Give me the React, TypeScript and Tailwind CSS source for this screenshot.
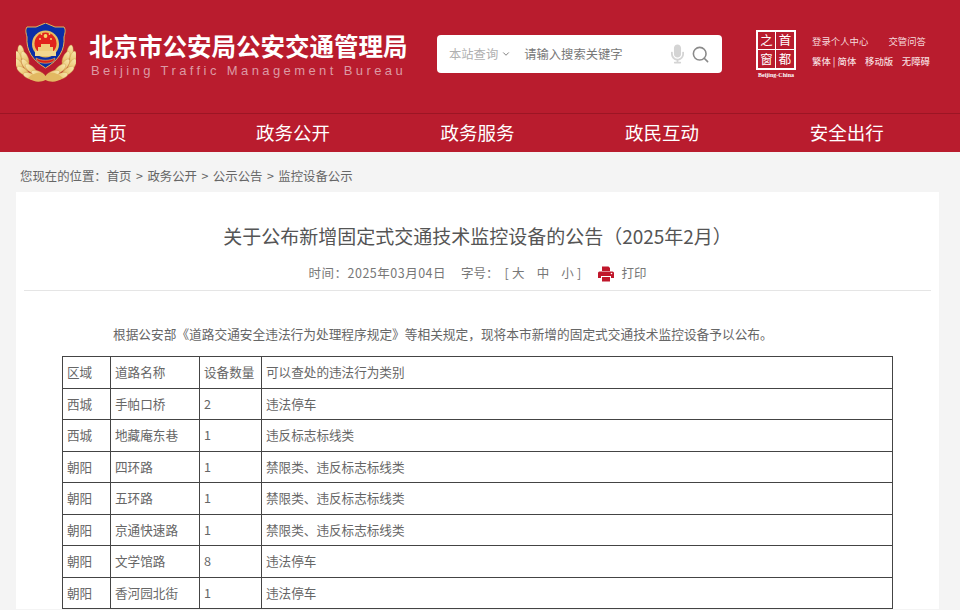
import { ChevronDown, Search } from 'lucide-react';
import { FaMicrophone } from 'react-icons/fa';

const navItems = ['首页', '政务公开', '政务服务', '政民互动', '安全出行'];

const rows = [
  ['区域', '道路名称', '设备数量', '可以查处的违法行为类别'],
  ['西城', '手帕口桥', '2', '违法停车'],
  ['西城', '地藏庵东巷', '1', '违反标志标线类'],
  ['朝阳', '四环路', '1', '禁限类、违反标志标线类'],
  ['朝阳', '五环路', '1', '禁限类、违反标志标线类'],
  ['朝阳', '京通快速路', '1', '禁限类、违反标志标线类'],
  ['朝阳', '文学馆路', '8', '违法停车'],
  ['朝阳', '香河园北街', '1', '违法停车'],
];

// wreath leaves for the left side, mirrored for the right
const leaves = [
  [11, 32, 10],
  [8, 38, 15],
  [15, 38, 25],
  [9, 45, 30],
  [16, 45, 35],
  [13, 51, 55],
  [21, 49, 50],
  [20, 56, 72],
  [28, 54, 70],
];

const Emblem = () => (
  <svg width="60" height="60" viewBox="6 3 60 60" className="shrink-0 mb-[7px]">
    <defs>
      <linearGradient id="gold" x1="0" y1="0" x2="0" y2="1">
        <stop offset="0" stopColor="#f8e7ae" />
        <stop offset="0.6" stopColor="#eccb7c" />
        <stop offset="1" stopColor="#d6a84c" />
      </linearGradient>
    </defs>
    {leaves.map(([x, y, r], i) => (
      <g key={i}>
        <ellipse cx={x} cy={y} rx="3" ry="7" transform={`rotate(${-r} ${x} ${y})`} fill="url(#gold)" stroke="#cfa24e" strokeWidth="0.4" />
        <ellipse cx={71 - x} cy={y} rx="3" ry="7" transform={`rotate(${r} ${71 - x} ${y})`} fill="url(#gold)" stroke="#cfa24e" strokeWidth="0.4" />
      </g>
    ))}
    <path d="M18 58 C26 51 32 52 35.5 56 C39 52 45 51 53 58 C46 63 40 62 35.5 60 C31 62 25 63 18 58Z" fill="#e2b962" />
    <path d="M35.5 3 L45 7 L54 7 C56 10 55 13 54 17 C55 30 49 40 35.5 48 C22 40 16 30 17 17 C16 13 15 10 17 7 L26 7Z" fill="#0b2ea6" stroke="#dfb65c" strokeWidth="1" />
    <circle cx="35.5" cy="24" r="13.5" fill="#e8bf62" />
    <circle cx="35.5" cy="23.5" r="11" fill="#e2231c" />
    <path d="M25 31 H46 V36 H25Z" fill="#f2d890" />
    <path d="M28 27 H43 V31 H28Z M31 24 H40 V27 H31Z" fill="#efcf7c" />
    <path d="M26 38 C31 41 40 41 45 38 L44 41 C39 44 32 44 27 41Z" fill="#d92018" stroke="#e8bf62" strokeWidth="0.6" />
    <circle cx="35.5" cy="16" r="1.9" fill="#f6d868" />
    <circle cx="30" cy="19" r="1" fill="#f6d868" />
    <circle cx="41" cy="19" r="1" fill="#f6d868" />
    <circle cx="31.5" cy="14" r="0.9" fill="#f6d868" />
    <circle cx="39.5" cy="14" r="0.9" fill="#f6d868" />
  </svg>
);

const PrintIcon = () => (
  <svg width="16" height="16" viewBox="0 0 16 16" className="shrink-0 mt-[3px] ml-[17px]">
    <path d="M4 0.5 H10.5 L12 2 V5 H4Z" fill="#c0172b" />
    <path d="M1.5 5.5 H14.5 Q16 5.5 16 7 V12 H13 V10 H3 V12 H0 V7 Q0 5.5 1.5 5.5Z" fill="#c0172b" />
    <path d="M4 11 H12 V15.5 H4Z" fill="#c0172b" />
    <circle cx="13.5" cy="7.5" r="0.8" fill="#ffffff" />
  </svg>
);

const CapitalLogo = () => (
  <div className="flex flex-col items-center w-[44px] shrink-0 ml-[32px] mb-[4px]">
    <div className="w-[40px] h-[40px] border-[2px] border-white grid grid-cols-2 grid-rows-2 text-white text-[12.4px] leading-none">
      <span className="flex items-center justify-center border-r border-b border-white">之</span>
      <span className="flex items-center justify-center border-b border-white">首</span>
      <span className="flex items-center justify-center border-r border-white">窗</span>
      <span className="flex items-center justify-center">都</span>
    </div>
    <span className="text-[6px] leading-[8px] mt-[1px] text-white font-bold whitespace-nowrap font-['Liberation_Serif',serif]">Beijing-China</span>
  </div>
);

const App = () => {
  return (
    <div className="h-[610px] overflow-hidden bg-[#f4f4f4] font-['Noto_Sans_CJK_SC','Noto_Sans',sans-serif]">
      <header className="bg-[#b91c2e] h-[152px] flex flex-col">
        <div className="h-[114px] flex items-center pl-[16px] border-b border-[#9c1524]">
          <Emblem />
          <div className="ml-[13px] w-[320px] shrink-0 pb-[4px]">
            <h1 className="text-[24.5px] leading-[32px] font-bold text-white whitespace-nowrap">北京市公安局公安交通管理局</h1>
            <p className="text-[13px] leading-[16px] mt-[1px] pl-[2px] tracking-[3.4px] text-[#dc9aa4] whitespace-nowrap font-['Liberation_Sans',sans-serif]">Beijing Traffic Management Bureau</p>
          </div>
          <div className="ml-[28px] w-[285px] h-[38px] shrink-0 mb-[5px] bg-white rounded-[4px] flex items-center pl-[12px] pr-[12px] text-[12.3px]">
            <span className="text-[#b0b0b0] whitespace-nowrap">本站查询</span>
            <ChevronDown className="w-[10px] h-[10px] text-[#666666] ml-[3px]" />
            <span className="ml-[13px] text-[#777777] whitespace-nowrap">请输入搜索关键字</span>
            <FaMicrophone className="ml-auto w-[13px] h-[20px] text-[#d4d4d4]" />
            <Search className="ml-[7px] w-[19px] h-[19px] text-[#8a8a8a]" />
          </div>
          <CapitalLogo />
          <div className="ml-[14px] w-[118px] shrink-0 mb-[11px] text-[9.4px] leading-[14px] text-[#f6dadd] whitespace-nowrap">
            <div className="flex justify-between pr-[4px]">
              <span>登录个人中心</span>
              <span>交管问答</span>
            </div>
            <div className="flex justify-between mt-[6px] font-medium">
              <span>繁体 | 简体</span>
              <span>移动版</span>
              <span>无障碍</span>
            </div>
          </div>
        </div>
        <nav className="flex-1 grid grid-cols-5 ml-[16px] mr-[21px] items-center text-white text-[18.5px] text-center">
          {navItems.map((item) => (
            <a key={item}>{item}</a>
          ))}
        </nav>
      </header>

      <div className="h-[40px] pl-[20px] pt-[8px] flex items-center text-[12.4px] text-[#666666]">
        <span>您现在的位置：</span>
        <span>首页</span>
        <span className="mx-[4.5px]">&gt;</span>
        <span>政务公开</span>
        <span className="mx-[4.5px]">&gt;</span>
        <span>公示公告</span>
        <span className="mx-[4.5px]">&gt;</span>
        <span>监控设备公示</span>
      </div>

      <main className="ml-[16px] w-[923px] bg-white px-[8px] pt-[30px]">
        <h2 className="text-[19px] leading-[28px] text-[#555555] text-center">关于公布新增固定式交通技术监控设备的公告（2025年2月）</h2>
        <div className="mt-[13px] h-[28px] border-b border-[#e5e5e5] flex justify-center items-start text-[12.5px] leading-[20px] text-[#777777]">
          <span className="tracking-[0.5px]">时间：2025年03月04日</span>
          <span className="ml-[15px]">字号：</span>
          <span className="ml-[6px] whitespace-pre tracking-[0.2px]">[ 大    中    小 ]</span>
          <PrintIcon />
          <span className="ml-[7px]">打印</span>
        </div>
        <p className="mt-[33px] ml-[89px] text-[12.7px] leading-[20px] text-[#666666] whitespace-nowrap">
          根据公安部《道路交通安全违法行为处理程序规定》等相关规定，现将本市新增的固定式交通技术监控设备予以公布。
        </p>
        <table className="mt-[12px] ml-[38px] w-[831px] table-fixed border-collapse text-[12.6px] text-[#666666]">
          <colgroup>
            <col className="w-[48px]" />
            <col className="w-[89px]" />
            <col className="w-[62px]" />
            <col />
          </colgroup>
          <tbody>
            {rows.map((row, i) => (
              <tr key={i} className="h-[31.5px]">
                {row.map((cell, j) => (
                  <td key={j} className="border border-[#444444] pl-[4px] pr-[4px] pt-[1px] pb-0 whitespace-nowrap overflow-hidden">
                    {cell}
                  </td>
                ))}
              </tr>
            ))}
          </tbody>
        </table>
      </main>
    </div>
  );
};

export default App;
